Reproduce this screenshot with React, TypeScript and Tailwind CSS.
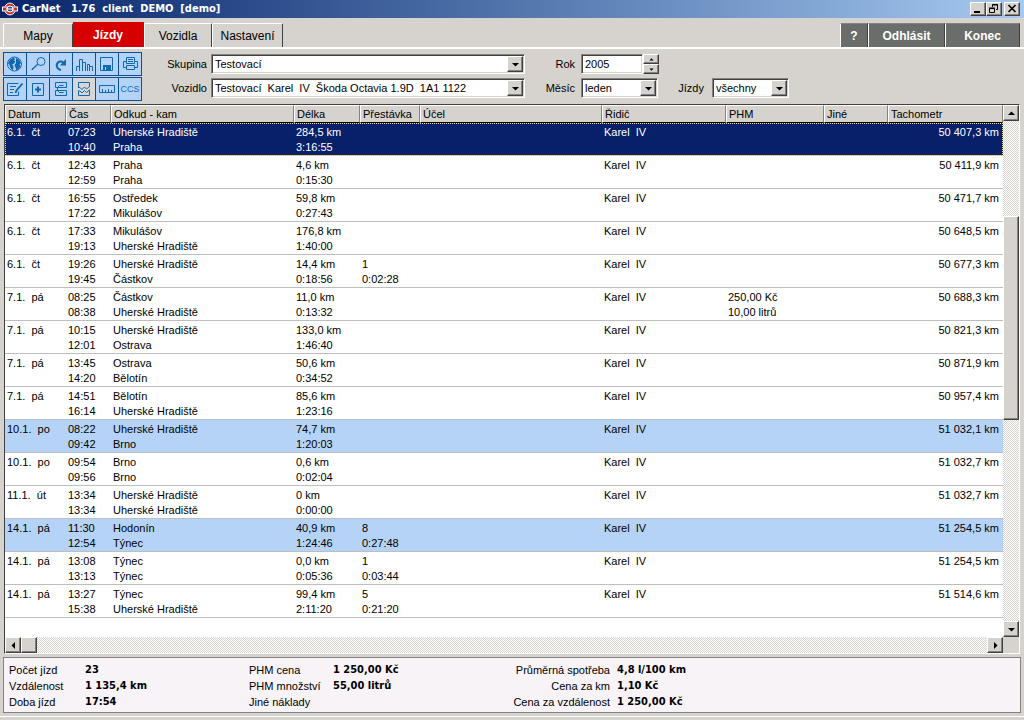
import type { ReactNode } from 'react'
import clsx from 'clsx'

interface Trip {
  date: string
  day: string
  times: [string, string]
  places: [string, string]
  length: [string, string]
  pause?: [string, string]
  fuel?: [string, string]
  odometer: string
  state?: 'selected' | 'marked'
}

const trips: Trip[] = [
  { date: '6.1.', day: 'čt', times: ['07:23', '10:40'], places: ['Uherské Hradiště', 'Praha'], length: ['284,5 km', '3:16:55'], odometer: '50 407,3 km', state: 'selected' },
  { date: '6.1.', day: 'čt', times: ['12:43', '12:59'], places: ['Praha', 'Praha'], length: ['4,6 km', '0:15:30'], odometer: '50 411,9 km' },
  { date: '6.1.', day: 'čt', times: ['16:55', '17:22'], places: ['Ostředek', 'Mikulášov'], length: ['59,8 km', '0:27:43'], odometer: '50 471,7 km' },
  { date: '6.1.', day: 'čt', times: ['17:33', '19:13'], places: ['Mikulášov', 'Uherské Hradiště'], length: ['176,8 km', '1:40:00'], odometer: '50 648,5 km' },
  { date: '6.1.', day: 'čt', times: ['19:26', '19:45'], places: ['Uherské Hradiště', 'Částkov'], length: ['14,4 km', '0:18:56'], pause: ['1', '0:02:28'], odometer: '50 677,3 km' },
  { date: '7.1.', day: 'pá', times: ['08:25', '08:38'], places: ['Částkov', 'Uherské Hradiště'], length: ['11,0 km', '0:13:32'], fuel: ['250,00 Kč', '10,00 litrů'], odometer: '50 688,3 km' },
  { date: '7.1.', day: 'pá', times: ['10:15', '12:01'], places: ['Uherské Hradiště', 'Ostrava'], length: ['133,0 km', '1:46:40'], odometer: '50 821,3 km' },
  { date: '7.1.', day: 'pá', times: ['13:45', '14:20'], places: ['Ostrava', 'Bělotín'], length: ['50,6 km', '0:34:52'], odometer: '50 871,9 km' },
  { date: '7.1.', day: 'pá', times: ['14:51', '16:14'], places: ['Bělotín', 'Uherské Hradiště'], length: ['85,6 km', '1:23:16'], odometer: '50 957,4 km' },
  { date: '10.1.', day: 'po', times: ['08:22', '09:42'], places: ['Uherské Hradiště', 'Brno'], length: ['74,7 km', '1:20:03'], odometer: '51 032,1 km', state: 'marked' },
  { date: '10.1.', day: 'po', times: ['09:54', '09:56'], places: ['Brno', 'Brno'], length: ['0,6 km', '0:02:04'], odometer: '51 032,7 km' },
  { date: '11.1.', day: 'út', times: ['13:34', '13:34'], places: ['Uherské Hradiště', 'Uherské Hradiště'], length: ['0 km', '0:00:00'], odometer: '51 032,7 km' },
  { date: '14.1.', day: 'pá', times: ['11:30', '12:54'], places: ['Hodonín', 'Týnec'], length: ['40,9 km', '1:24:46'], pause: ['8', '0:27:48'], odometer: '51 254,5 km', state: 'marked' },
  { date: '14.1.', day: 'pá', times: ['13:08', '13:13'], places: ['Týnec', 'Týnec'], length: ['0,0 km', '0:05:36'], pause: ['1', '0:03:44'], odometer: '51 254,5 km' },
  { date: '14.1.', day: 'pá', times: ['13:27', '15:38'], places: ['Týnec', 'Uherské Hradiště'], length: ['99,4 km', '2:11:20'], pause: ['5', '0:21:20'], odometer: '51 514,6 km' },
]

const columns = [
  { title: 'Datum', width: 'w-[61px]' },
  { title: 'Čas', width: 'w-[45px]' },
  { title: 'Odkud - kam', width: 'w-[183px]' },
  { title: 'Délka', width: 'w-[66px]' },
  { title: 'Přestávka', width: 'w-[60px]' },
  { title: 'Účel', width: 'w-[182px]' },
  { title: 'Řidič', width: 'w-[124px]' },
  { title: 'PHM', width: 'w-[98px]' },
  { title: 'Jiné', width: 'w-[64px]' },
  { title: 'Tachometr', width: '' },
]

// classic 3D edges
const raised =
  'bg-[#d6d3ce] border border-t-white border-l-white border-r-[#404040] border-b-[#404040] shadow-[inset_-1px_-1px_0_#848284]'
const sunken =
  'bg-white border border-t-[#848284] border-l-[#848284] border-r-white border-b-white shadow-[inset_1px_1px_0_#404040,inset_-1px_-1px_0_#d6d3ce]'
const track = 'bg-[repeating-conic-gradient(#ffffff_0_25%,#d6d3ce_0_50%)] bg-[length:2px_2px]'

const arrows = {
  up: 'M4 9h7L7.5 5.5z',
  down: 'M4 6h7L7.5 9.5z',
  left: 'M9 4v7L5.5 7.5z',
  right: 'M6 4v7L9.5 7.5z',
}

function Arrow({ dir, className = 'size-[15px]' }: { dir: keyof typeof arrows; className?: string }) {
  return (
    <svg viewBox="0 0 15 15" className={className} aria-hidden="true">
      <path d={arrows[dir]} fill="#000" />
    </svg>
  )
}

function ScrollButton({ dir, label }: { dir: keyof typeof arrows; label: string }) {
  return (
    <button aria-label={label} className={clsx(raised, 'flex size-4 shrink-0 items-center justify-center')}>
      <Arrow dir={dir} className="size-[15px] shrink-0" />
    </button>
  )
}

function Select({ id, value, className }: { id: string; value: string; className: string }) {
  return (
    <div className={clsx(sunken, 'flex h-5 p-px', className)}>
      <select id={id} className="min-w-0 flex-1 appearance-none whitespace-pre bg-transparent pl-0.5 outline-none">
        <option>{value}</option>
      </select>
      <span className={clsx(raised, 'pointer-events-none flex w-4 items-center justify-center')}>
        <Arrow dir="down" className="size-[15px] shrink-0" />
      </span>
    </div>
  )
}

function ToolButton({ label, active, children }: { label: string; active?: boolean; children: ReactNode }) {
  return (
    <button
      aria-label={label}
      className={clsx(
        'flex h-6 w-6 items-center justify-center border border-[#0a509c] text-[#1068b0]',
        active ? 'bg-[#d6d7d6]' : 'bg-[#b5d3f7]'
      )}
    >
      {children}
    </button>
  )
}

function Icon({ children }: { children: ReactNode }) {
  return (
    <svg viewBox="0 0 22 22" className="size-[22px] shrink-0" fill="none" stroke="currentColor" strokeWidth="1" aria-hidden="true">
      {children}
    </svg>
  )
}

const tools: { label: string; icon: ReactNode; active?: boolean }[] = [
  {
    label: 'Mapa',
    icon: (
      <>
        <circle cx="10.5" cy="11" r="7" />
        <path d="M6 6.5l4-2 1 1.5-1 1.5 1.5 1-1.5 2-2 1 1.5 1.5v2l-1 2.5-2-2.5-1-3-1.5-2zM12 5l3 1.5 2 3.5-1.5 1.5 1 2-2.5 3-1.5 1-1-3-1-2.5 1.5-2z" fill="currentColor" stroke="none" />
      </>
    ),
  },
  {
    label: 'Hledat',
    icon: (
      <>
        <circle cx="14" cy="8.5" r="4" />
        <path d="M11 11.500l-6 5.500M10.500 11l-6 5.500" />
      </>
    ),
  },
  {
    label: 'Obnovit',
    icon: (
      <>
        <path d="M11 17c-4-.500-5.500-5-3-7.500 2-2 5-1 6 1.500" strokeWidth="2" />
        <path d="M16 6v6.500h-6z" fill="currentColor" stroke="none" />
      </>
    ),
  },
  { label: 'Graf', icon: <path d="M3.500 18v-4.500h3v4.500M6.500 14v-7.500h3v11.500M9.500 9.500h3v8.500M14.500 18v-6.500h2v6.500M16.500 13.500h3v4.500" /> },
  {
    label: 'Uložit',
    icon: (
      <>
        <path d="M4.500 4.500h12v13h-12z" />
        <path d="M7 12h8v5.500h-8z" fill="currentColor" stroke="none" />
        <path d="M9.500 14v3" stroke="#b5d3f7" />
      </>
    ),
  },
  {
    label: 'Tisk',
    icon: (
      <>
        <path d="M7.500 10.500v-6h8v6M9 6.500h5M9 8.500h5M7.500 8.500h-3v6h3M15.500 8.500h3v6h-3M7.500 12.500h8v4h-8z" />
        <path d="M7.500 10.500h8" />
      </>
    ),
  },
  {
    label: 'Upravit',
    icon: (
      <>
        <path d="M14.500 5.500h-11v12h11v-4M6 8.500h6M6 11.500h4M6 14.500h3" />
        <path d="M18.500 5.500l-6 7-1 2.500" strokeWidth="1.8" />
      </>
    ),
  },
  {
    label: 'Přidat',
    icon: (
      <>
        <path d="M5.500 5.500h11v12h-11z" />
        <path d="M11 8.500v6M8 11.500h6" strokeWidth="2" />
      </>
    ),
  },
  { label: 'Rozdělit', icon: <path d="M9 4.500H5.500v5h11v-5H9M9 12.500H5.500v5h11v-5H9M9.500 7.500h4M9.500 14.500h4M9.500 7.500l-2 2v3l2 2" /> },
  {
    label: 'Spojit',
    active: true,
    icon: (
      <>
        <path d="M5.500 9.500v-5h11v4M5.500 13v4.500h11v-5" />
        <path d="M5 9.500h2l2 2 2.500-2.500 2 2 3.500-3M5 13h2l2 2 2.500-2.500 2 2 3.500-3" />
      </>
    ),
  },
  { label: 'Měřítko', icon: <path d="M3.500 7.500h15v7h-15zM6.500 11v3M9.500 12v2M12.500 11v3M15.500 12v2" /> },
  { label: 'CCS', icon: null },
]

function TopBar() {
  return (
    <header className="flex h-[18px] items-center bg-linear-to-r from-[#0a246a] to-[#a6caf0] pl-0.5 pr-1">
      <svg viewBox="0 0 16 14" className="mr-1 h-3.5 w-4" aria-hidden="true">
        <path d="M3 4.500C5 0 11 0 13 4.500M3 9.500C5 14 11 14 13 9.500" fill="#c4312f" stroke="#fff" strokeWidth="1" />
        <path d="M0 4.500h16v5H0z" fill="#fff" />
        <path d="M1 5.500h14v3H1z" fill="#c4312f" />
        <circle cx="8" cy="7" r="3" fill="#3a5090" stroke="#fff" />
        <path d="M4 7h8" stroke="#fff" />
      </svg>
      <h1 className="flex-1 whitespace-pre font-['DejaVu_Sans_Condensed','DejaVu_Sans',sans-serif] text-[11px] font-bold text-white">
        {'CarNet   1.76  client  DEMO  [demo]'}
      </h1>
      <button aria-label="Minimalizovat" className={clsx(raised, 'h-3.5 w-4')}>
        <svg viewBox="0 0 14 12" className="h-3 w-3.5"><path d="M3 8h6v2H3z" /></svg>
      </button>
      <button aria-label="Obnovit okno" className={clsx(raised, 'mr-0.5 h-3.5 w-4')}>
        <svg viewBox="0 0 14 12" className="h-3 w-3.5" fill="none" stroke="#000">
          <path d="M5.500 4V1.500h5v5H9M5 2h6M2.500 5.500h5v4h-5zM2 5h6" />
        </svg>
      </button>
      <button aria-label="Zavřít" className={clsx(raised, 'h-3.5 w-4')}>
        <svg viewBox="0 0 14 12" className="h-3 w-3.5" stroke="#000" strokeWidth="1.600"><path d="M3.500 2l7 7M10.500 2l-7 7" /></svg>
      </button>
    </header>
  )
}

const tab = 'h-6 border-l border-t border-r border-l-white border-t-white border-r-[#404040] rounded-t-xs text-xs'
const action = 'h-6 border-l border-t border-r border-l-white border-t-[#848284] border-r-[#404040] bg-[#6b6d6b] text-xs font-bold text-white'

function Tabs() {
  return (
    <nav className="flex items-end border-b-2 border-b-white pl-[3px] pr-1 pt-1">
      <button className={clsx(tab, 'w-[70px]')}>Mapy</button>
      <button aria-current="page" className="h-[25px] w-[71px] border-r border-[#404040] bg-[#d60000] text-xs font-bold text-white">
        Jízdy
      </button>
      <button className={clsx(tab, 'w-[68px]')}>Vozidla</button>
      <button className={clsx(tab, 'w-[71px]')}>Nastavení</button>
      <div className="flex-1" />
      <button className={clsx(action, 'w-7')}>?</button>
      <button className={clsx(action, 'w-[77px]')}>Odhlásit</button>
      <button className={clsx(action, 'w-[75px]')}>Konec</button>
    </nav>
  )
}

function Toolbar() {
  return (
    <div className="flex items-start pl-[3px] pt-[3px] pb-[3px]">
      <div className="grid grid-cols-[repeat(6,23px)] gap-y-px pr-px">
        {tools.map((t) => (
          <ToolButton key={t.label} label={t.label} active={t.active}>
            {t.icon ? <Icon>{t.icon}</Icon> : <span className="text-[9px]">CCS</span>}
          </ToolButton>
        ))}
      </div>
      <div className="ml-[22px] grid grid-cols-[43px_314px_48px_80px_43px_77px] items-center gap-x-1 gap-y-1 pt-0.5 text-right">
        <label htmlFor="group">Skupina</label>
        <Select id="group" value="Testovací" className="w-full" />
        <label htmlFor="year" className="pr-0.5">Rok</label>
        <div className="flex items-center">
          <div className={clsx(sunken, 'h-5 w-[62px] p-px')}>
            <input id="year" defaultValue="2005" className="h-full w-full bg-transparent pl-0.5 outline-none" />
          </div>
          <div className="flex flex-col">
            <button aria-label="Další rok" className={clsx(raised, 'flex h-2.5 w-4 items-center justify-center overflow-hidden')}>
              <Arrow dir="up" className="size-[9px] shrink-0" />
            </button>
            <button aria-label="Předchozí rok" className={clsx(raised, 'flex h-2.5 w-4 items-center justify-center overflow-hidden')}>
              <Arrow dir="down" className="size-[9px] shrink-0" />
            </button>
          </div>
        </div>
        <span />
        <span />
        <label htmlFor="vehicle">Vozidlo</label>
        <Select id="vehicle" value={'Testovací\u00a0 Karel\u00a0 IV\u00a0 Škoda Octavia 1.9D\u00a0 1A1 1122'} className="w-full" />
        <label htmlFor="month" className="pr-0.5">Měsíc</label>
        <Select id="month" value="leden" className="w-[77px]" />
        <label htmlFor="trips" className="pr-1">Jízdy</label>
        <Select id="trips" value="všechny" className="w-full" />
      </div>
    </div>
  )
}

function Cell({ lines, className }: { lines?: string[]; className?: string }) {
  return (
    <td className={clsx('h-[33px] whitespace-pre border-b border-[#bdbebd] pl-0.5 pt-0.5 align-top leading-[15px]', className)}>
      {lines?.map((line, i) => <div key={i}>{line}</div>)}
    </td>
  )
}

function TripTable() {
  return (
    <table className="w-full table-fixed border-separate border-spacing-0 text-left">
      <thead>
        <tr>
          {columns.map((c) => (
            <th
              key={c.title}
              className={clsx(
                'h-[18px] border-b border-l border-r border-t border-b-black border-l-white border-r-[#848284] border-t-white bg-[#d6d3ce] pl-0.5 font-normal leading-4',
                c.width
              )}
            >
              {c.title}
            </th>
          ))}
        </tr>
      </thead>
      <tbody>
        {trips.map((t, i) => (
          <tr
            key={i}
            className={clsx(
              t.state === 'selected' && 'bg-[#082069] text-white outline-1 -outline-offset-1 outline-dotted outline-[#f7df96]',
              t.state === 'marked' && 'bg-[#b5d3f7]'
            )}
          >
            <Cell lines={[`${t.date}  ${t.day}`]} />
            <Cell lines={t.times} />
            <Cell lines={t.places} />
            <Cell lines={t.length} />
            <Cell lines={t.pause} />
            <Cell />
            <Cell lines={['Karel  IV']} />
            <Cell lines={t.fuel} />
            <Cell />
            <Cell lines={[t.odometer]} className="pr-1 text-right" />
          </tr>
        ))}
      </tbody>
    </table>
  )
}

function TripList() {
  return (
    <main className="ml-1 mr-1 flex flex-1 flex-col border border-b-white border-l-[#404040] border-r-white border-t-[#404040]">
      <div className="flex flex-1">
        <div className="flex-1 bg-white">
          <TripTable />
        </div>
        <div className={clsx(track, 'flex w-4 flex-col')}>
          <ScrollButton dir="up" label="Posunout nahoru" />
          <div className="grow-[95]" />
          <div className={clsx(raised, 'grow-[203]')} />
          <div className="grow-[202]" />
          <ScrollButton dir="down" label="Posunout dolů" />
        </div>
      </div>
      <div className="flex">
        <div className={clsx(track, 'flex flex-1')}>
          <ScrollButton dir="left" label="Posunout doleva" />
          <div className={clsx(raised, 'w-4')} />
          <div className="flex-1" />
          <ScrollButton dir="right" label="Posunout doprava" />
        </div>
        <div className="w-4" />
      </div>
    </main>
  )
}

function Total({ label, value, right }: { label: string; value?: string; right?: boolean }) {
  return (
    <>
      <dt className={clsx(right && 'text-right')}>{label}</dt>
      <dd className="font-['DejaVu_Sans_Condensed','DejaVu_Sans',sans-serif] font-bold">{value}</dd>
    </>
  )
}

function Summary() {
  return (
    <footer className="mx-[3px] mb-[3px] mt-[3px] flex border border-[#848284] bg-[#f7f3f7] px-[5px] pb-0.5 pt-1 leading-4">
      <dl className="grid w-60 grid-cols-[76px_1fr]">
        <Total label="Počet jízd" value="23" />
        <Total label="Vzdálenost" value="1 135,4 km" />
        <Total label="Doba jízd" value="17:54" />
      </dl>
      <dl className="grid w-[262px] grid-cols-[84px_1fr]">
        <Total label="PHM cena" value="1 250,00 Kč" />
        <Total label="PHM množství" value="55,00 litrů" />
        <Total label="Jiné náklady" />
      </dl>
      <dl className="grid grid-cols-[99px_1fr] gap-x-[7px]">
        <Total right label="Průměrná spotřeba" value="4,8 l/100 km" />
        <Total right label="Cena za km" value="1,10 Kč" />
        <Total right label="Cena za vzdálenost" value="1 250,00 Kč" />
      </dl>
    </footer>
  )
}

export default function App() {
  return (
    <div className="flex min-h-screen flex-col bg-[#d6d3ce] font-['Liberation_Sans',Arial,sans-serif] text-[11px] leading-4 text-black">
      <TopBar />
      <Tabs />
      <Toolbar />
      <TripList />
      <Summary />
      <div className="h-1 border-t border-white" />
    </div>
  )
}
